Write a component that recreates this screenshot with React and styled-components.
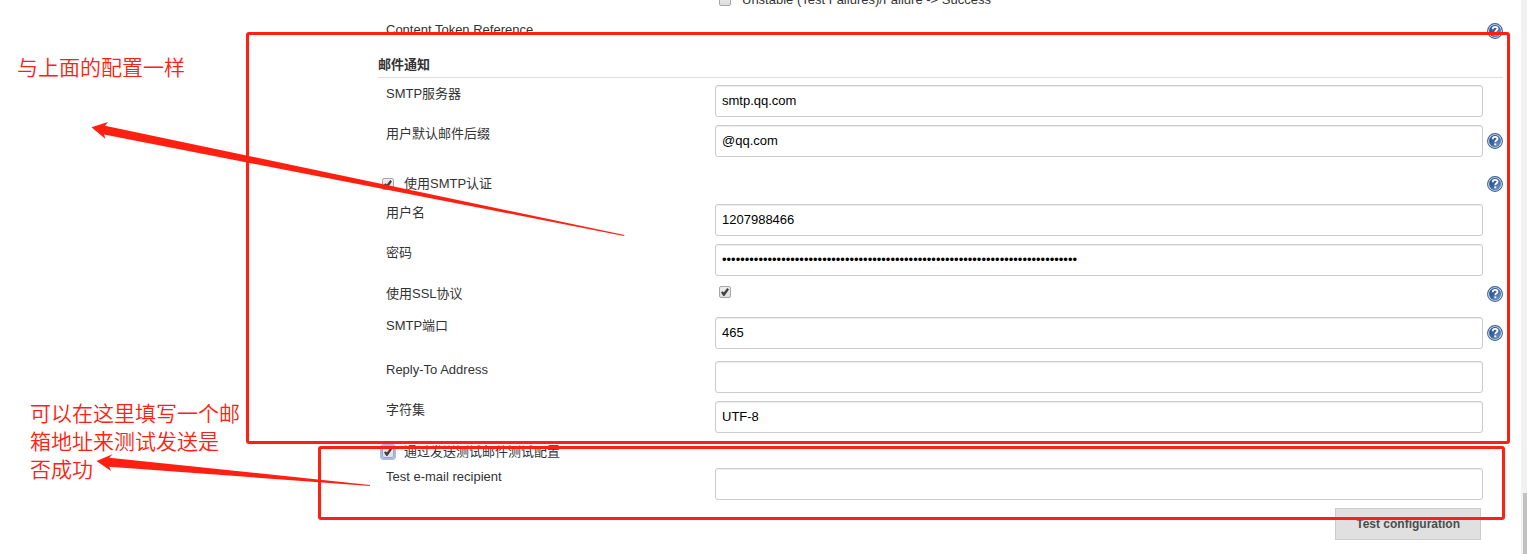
import React from 'react';
import styled, { createGlobalStyle } from 'styled-components';

const RED = '#ff2012';

export default function App() {
  return (
    <Page>
      <GlobalStyle />
      <Content>
        <Form onSubmit={(event) => event.preventDefault()}>
          <TriggerRow>
            <Checkbox type="checkbox" id="unstable" />
            <label htmlFor="unstable">Unstable (Test Failures)/Failure -&gt; Success</label>
          </TriggerRow>
          <TokenRow>
            <span>Content Token Reference</span>
            <Help />
          </TokenRow>

          <SectionTitle>邮件通知</SectionTitle>
          <TextRow id="server" label="SMTP服务器" value="smtp.qq.com" />
          <TextRow id="suffix" label="用户默认邮件后缀" value="@qq.com" help />
          <OptionRow $height={39}>
            <Option>
              <Checkbox type="checkbox" id="auth" defaultChecked />
              <label htmlFor="auth">使用SMTP认证</label>
            </Option>
            <Help />
          </OptionRow>
          <TextRow id="user" label="用户名" value="1207988466" />
          <TextRow id="password" type="password" label="密码" value={'x'.repeat(78)} />
          <SslRow>
            <Label htmlFor="ssl">使用SSL协议</Label>
            <SslField>
              <Checkbox type="checkbox" id="ssl" defaultChecked />
            </SslField>
            <Help />
          </SslRow>
          <TextRow id="port" label="SMTP端口" value="465" help spaced />
          <TextRow id="reply" label="Reply-To Address" value="" />
          <TextRow id="charset" label="字符集" value="UTF-8" />

          <OptionRow $height={27}>
            <Option>
              <Checkbox type="checkbox" id="test" defaultChecked $focused />
              <label htmlFor="test">通过发送测试邮件测试配置</label>
            </Option>
          </OptionRow>
          <TextRow id="recipient" label="Test e-mail recipient" value="" />
          <Actions>
            <Button type="button">Test configuration</Button>
          </Actions>
        </Form>
      </Content>
      <ScrollTrack>
        <ScrollThumb />
      </ScrollTrack>

      <SettingsFrame />
      <TestFrame />
      <Arrows width="640" height="500" viewBox="0 0 640 500" aria-hidden="true">
        <path d="M91.5 127.3 108 122 105 125.7 624.5 235 624 236 104 134.5 105.5 139Z" />
        <path d="M96.5 461 112.5 454.3 109.3 457.7 370 485 370 486 109.3 466.7 111 471Z" />
      </Arrows>
      <SettingsNote>与上面的配置一样</SettingsNote>
      <TestNote>
        可以在这里填写一个邮
        <br />
        箱地址来测试发送是
        <br />
        否成功
      </TestNote>
    </Page>
  );
}

const TextRow = ({ id, label, value, type = 'text', help, spaced }) => (
  <Row $spaced={spaced}>
    <Label htmlFor={id}>{label}</Label>
    <Input id={id} type={type} defaultValue={value} />
    {help && <Help />}
  </Row>
);

const Help = () => (
  <HelpLink href="#help" aria-label="Help">
    <svg width="16" height="16" viewBox="0 0 16 16">
      <defs>
        <linearGradient id="helpFill" x1="0" y1="0" x2="1" y2="1">
          <stop offset="0" stopColor="#204a87" />
          <stop offset="0.5" stopColor="#3a66a5" />
          <stop offset="1" stopColor="#7fa6d6" />
        </linearGradient>
      </defs>
      <circle cx="8" cy="8" r="7.4" fill="#fff" stroke="#3a5f9a" strokeWidth="1.1" />
      <circle cx="8" cy="8" r="5.9" fill="url(#helpFill)" stroke="#2f5590" strokeWidth="0.4" />
      <path
        d="M5.6 6.2C5.7 4.6 6.6 3.9 8.1 3.9c1.5 0 2.4.8 2.4 1.9 0 1.5-2.2 1.6-2.2 3.4"
        fill="none"
        stroke="#fff"
        strokeWidth="1.8"
      />
      <rect x="7.3" y="10.4" width="2" height="1.9" fill="#fff" />
    </svg>
  </HelpLink>
);

const GlobalStyle = createGlobalStyle`
  * {
    box-sizing: border-box;
  }

  body {
    margin: 0;
    background: #fff;
    color: #333;
    font-family: 'Liberation Sans', Arial, 'Noto Sans CJK SC', sans-serif;
    font-size: 13px;
    line-height: 16px;
  }
`;

const Page = styled.div`
  position: relative;
  display: flex;
  min-height: 100vh;
  overflow: hidden;
`;

const Content = styled.main`
  flex: 1;
  min-width: 0;
  padding: 0 18px 14px 378px;
`;

/* the list is scrolled, so its first row is cut by the top edge */
const Form = styled.form`
  margin-top: -8px;
`;

const Row = styled.div`
  display: grid;
  grid-template-columns: 337px 1fr 20px;
  align-items: center;
  padding: 4px 0;
  margin-bottom: ${(props) => (props.$spaced ? '4px' : '0')};
`;

const SslRow = styled(Row)`
  align-items: start;
  height: 33px;
  padding-top: 6px;
`;

const SslField = styled.div`
  display: flex;
  padding-left: 4px;
`;

const TriggerRow = styled.div`
  display: flex;
  align-items: center;
  gap: 10px;
  height: 16px;
  padding-left: 341px;
`;

const OptionRow = styled.div`
  display: flex;
  align-items: flex-end;
  justify-content: space-between;
  height: ${(props) => props.$height}px;
  padding-bottom: ${(props) => (props.$height > 30 ? '8px' : '4px')};
`;

const Option = styled.div`
  display: flex;
  align-items: center;
  gap: 9px;
  padding-left: 4px;
`;

const TokenRow = styled.div`
  display: flex;
  align-items: center;
  justify-content: space-between;
  height: 46px;
  padding-left: 8px;

  span {
    padding-bottom: 2px;
  }
`;

const Label = styled.label`
  align-self: start;
  padding: 1px 0 0 8px;

  ${SslRow} & {
    padding-top: 0;
  }
`;

const SectionTitle = styled.h2`
  margin: 0 0 3px;
  padding: 3px 0 4px;
  border-bottom: 1px solid #ddd;
  font-size: 13px;
  line-height: 16px;
`;

const Input = styled.input`
  width: 100%;
  height: 32px;
  padding: 0 6px 2px;
  border: 1px solid #ccc;
  border-radius: 3px;
  background: #fff;
  box-shadow: inset 0 1px 1px rgba(0, 0, 0, 0.08);
  color: #000;
  font: inherit;
`;

const Checkbox = styled.input`
  appearance: none;
  display: grid;
  place-items: center;
  width: 12px;
  height: 12px;
  margin: 0 1px 0 0;
  border: 1px solid #a6a6a6;
  border-radius: 2px;
  background: linear-gradient(#ededed, #dedede);
  box-shadow: ${(props) => (props.$focused ? '0 0 0 2px #9dbcf5' : 'none')};

  &:checked::before {
    content: '';
    width: 8px;
    height: 8px;
    background: #404040;
    clip-path: polygon(0 55%, 20% 40%, 36% 56%, 78% 0, 100% 18%, 42% 100%, 30% 100%);
  }
`;

const HelpLink = styled.a`
  display: block;
  width: 16px;
  height: 16px;
  justify-self: end;

  svg {
    display: block;
  }
`;

const Actions = styled.div`
  display: flex;
  justify-content: flex-end;
  padding: 4px 22px 0 0;
`;

const Button = styled.button`
  height: 32px;
  padding: 0 20px;
  border: 1px solid #ccc;
  border-radius: 0;
  background: #e0e0e0;
  color: #4d4d4d;
  font-family: inherit;
  font-size: 12px;
  font-weight: bold;
`;

const ScrollTrack = styled.div`
  display: flex;
  flex-direction: column;
  justify-content: flex-end;
  width: 6px;
  padding-left: 2px;
  background: #f1f1f1;
`;

const ScrollThumb = styled.div`
  height: 11%;
  background: #c1c1c1;
`;

const Frame = styled.div`
  position: absolute;
  border: 3px solid ${RED};
  border-radius: 3px;
  pointer-events: none;
`;

const SettingsFrame = styled(Frame)`
  top: 32px;
  left: 246px;
  right: 17px;
  height: 412px;
`;

const TestFrame = styled(Frame)`
  top: 446px;
  left: 318px;
  right: 22px;
  height: 74px;
`;

const Arrows = styled.svg`
  position: absolute;
  top: 0;
  left: 0;
  fill: ${RED};
  pointer-events: none;
`;

const Note = styled.p`
  position: absolute;
  margin: 0;
  color: ${RED};
  font-family: 'Noto Sans CJK SC', sans-serif;
  font-size: 21px;
  font-weight: 350;
  line-height: 28px;
  white-space: nowrap;
`;

const SettingsNote = styled(Note)`
  top: 52px;
  left: 17px;
`;

const TestNote = styled(Note)`
  top: 398px;
  left: 30px;
`;
